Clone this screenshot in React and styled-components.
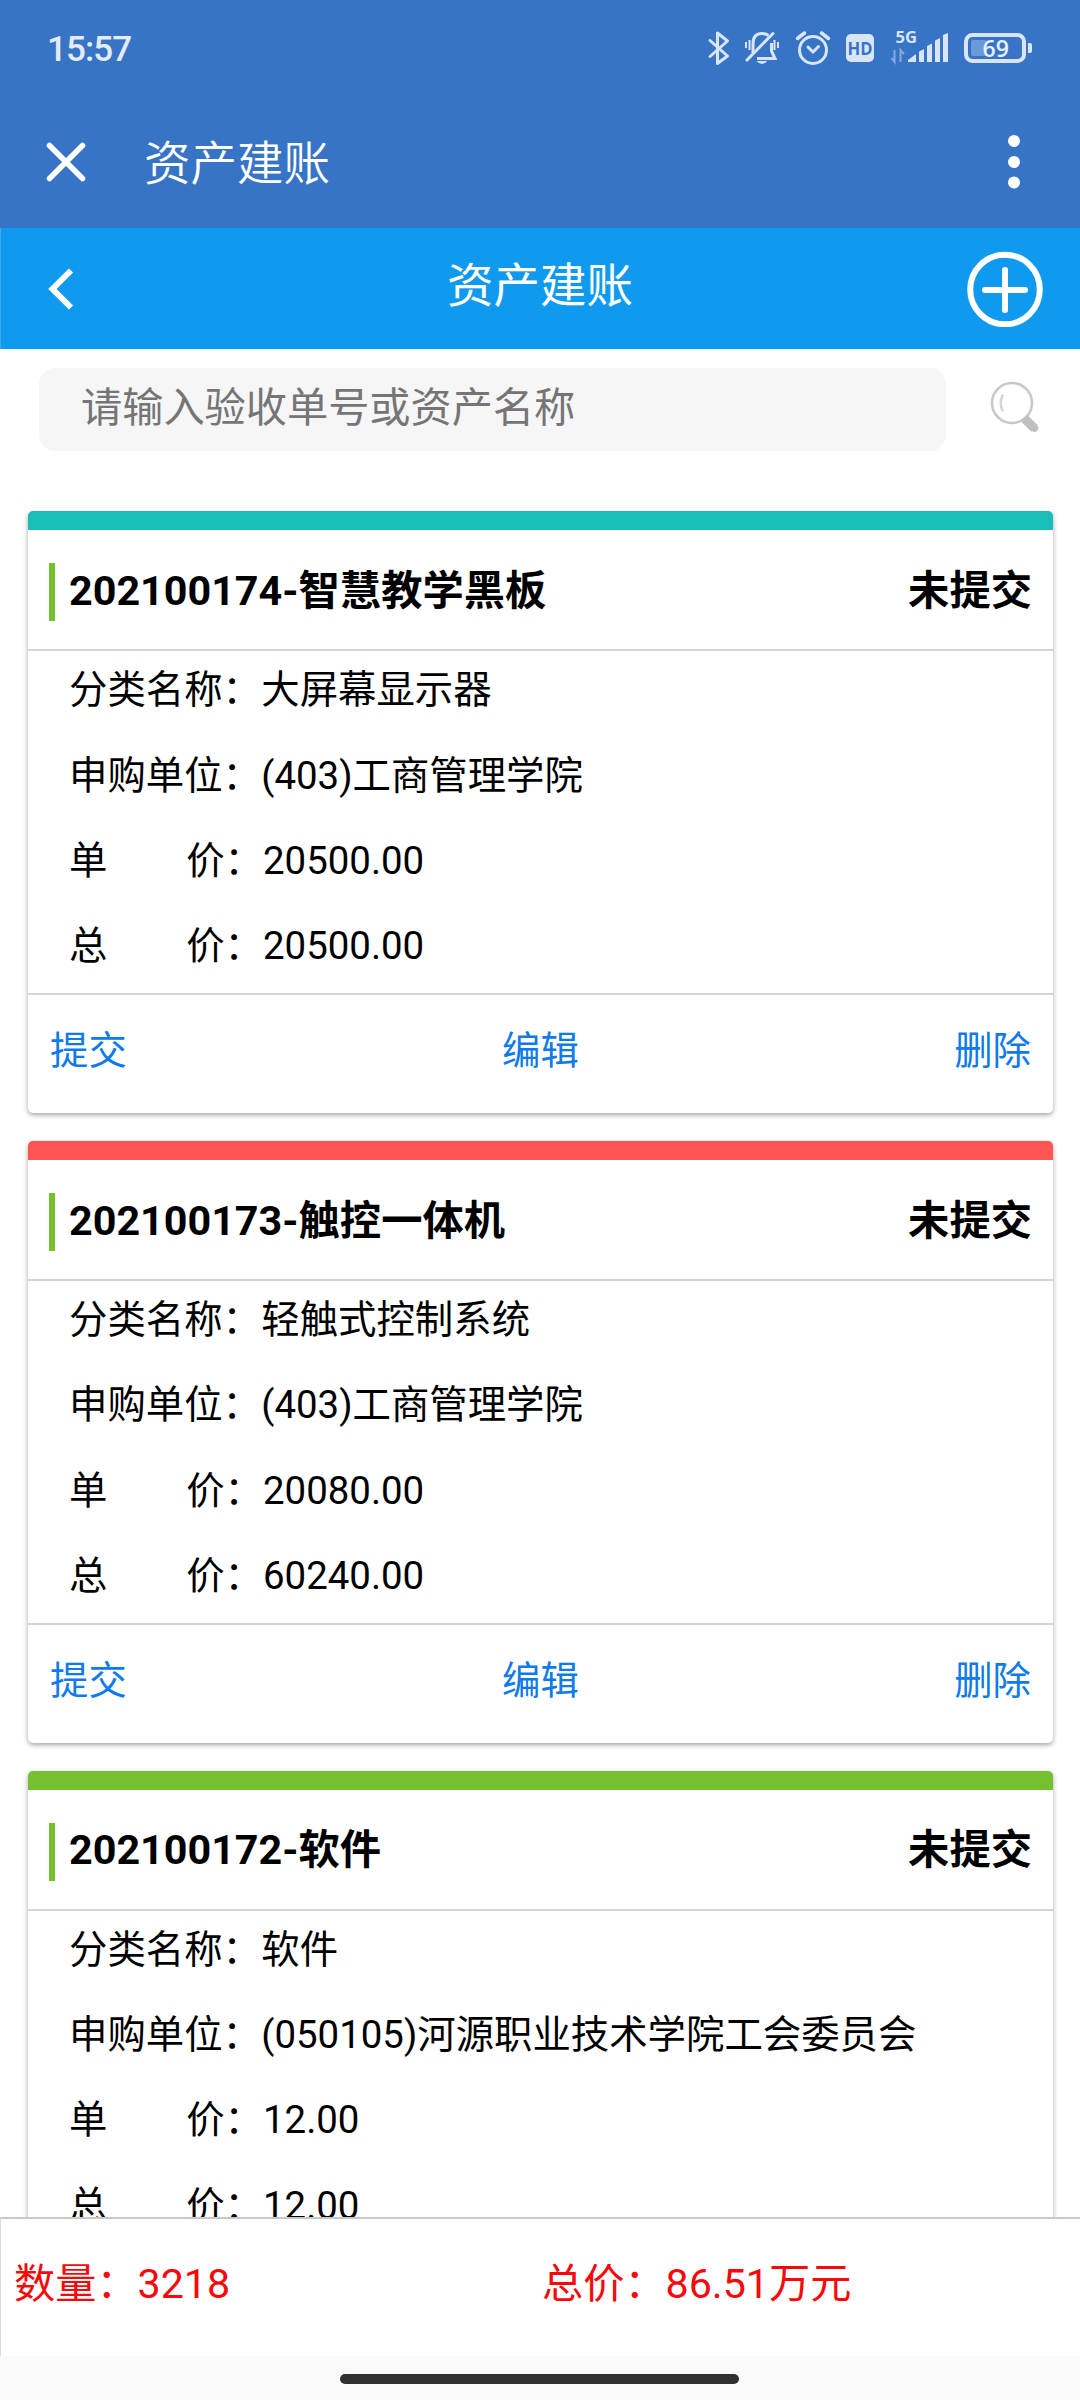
import styled, { createGlobalStyle } from "styled-components";

const GlobalStyle = createGlobalStyle`
  * {
    box-sizing: border-box;
  }
  body {
    margin: 0;
    background: #fff;
    font-family: Roboto, "Noto Sans CJK SC", sans-serif;
    color: #000;
  }
`;

const Screen = styled.div`
  width: 1080px;
  height: 2400px;
  display: flex;
  flex-direction: column;
  overflow: hidden;
  background: #fff;
`;

const StatusBar = styled.div`
  height: 97px;
  flex: none;
  padding: 0 48px 0 47px;
  display: flex;
  justify-content: space-between;
  background: #3874c6;
`;

const Clock = styled.span`
  font-size: 35px;
  font-weight: 500;
  line-height: 99px;
  letter-spacing: -0.9px;
  color: #e3ecfa;
`;

const StatusIcons = styled.svg`
  width: 330px;
  height: 97px;
  margin-right: -4px;
  font-family: "Open Sans", sans-serif;
`;

const AppBar = styled.div`
  height: 131px;
  flex: none;
  padding: 0 60px 1px 46px;
  display: flex;
  align-items: center;
  background: #3874c6;
  color: #fff;
`;

const AppTitle = styled.h1`
  flex: 1;
  margin: 4px 0 0 58px;
  font-size: 46.5px;
  line-height: 60px;
  font-weight: 350;
`;

const NavBar = styled.div`
  height: 121px;
  flex: none;
  padding: 0 37px 0 47px;
  display: flex;
  align-items: center;
  justify-content: space-between;
  background: #109aef;
  border-left: 1px solid #3fa9ee;
  color: #fff;
`;

const NavTitle = styled.h2`
  margin: 0 0 6px 39px;
  font-size: 46.5px;
  line-height: 60px;
  font-weight: 400;
`;

const SearchRow = styled.div`
  flex: none;
  height: 162px;
  padding: 19px 38px 0 39px;
  display: flex;
  justify-content: space-between;
`;

const SearchInput = styled.input`
  width: 907px;
  height: 83px;
  padding: 0 42px 3px;
  border: 0;
  border-radius: 16px;
  background: #f6f6f6;
  font-family: inherit;
  font-size: 41.2px;

  &::placeholder {
    color: #757575;
    opacity: 1;
  }
`;

const List = styled.div`
  flex: 1;
  min-height: 0;
  overflow: hidden;
  padding: 0.3px 27px 0 28px;
`;

const Card = styled.div`
  height: 602px;
  margin-bottom: 27.8px;
  border-top: 19px solid ${(props) => props.$color};
  border-radius: 5px;
  background: #fff;
  box-shadow: 0 2px 5px rgba(0, 0, 0, 0.36);
`;

const CardHead = styled.div`
  height: 121px;
  padding: 0 21px;
  display: flex;
  align-items: center;
  border-bottom: 2px solid #d3d3d3;
  font-size: 41.3px;
  font-weight: 700;

  span {
    margin-bottom: 6px;
  }
`;

const Mark = styled.div`
  width: 6px;
  height: 58px;
  margin-top: 5px;
  margin-right: 14px;
  background: #76bf2f;
`;

const CardTitle = styled.span`
  flex: 1;
`;

const CardBody = styled.div`
  height: 343.5px;
  padding-left: 41px;
  border-bottom: 2px solid #d3d3d3;
  font-size: 38.4px;
`;

const Field = styled.div`
  height: 85.3px;
  display: flex;
  line-height: 78px;
`;

const Label = styled.span`
  width: ${(props) => (props.$spaced ? 194 : 192.3)}px;
  display: flex;
  justify-content: space-between;
  white-space: nowrap;
`;

const CardActions = styled.div`
  height: 112px;
  padding: 0 22px;
  display: flex;
  justify-content: space-between;
  font-size: 38.4px;
  line-height: 111px;
  color: #0f7aec;
`;

const Footer = styled.div`
  flex: none;
  height: 139px;
  padding-left: 13px;
  display: grid;
  grid-template-columns: 528px 1fr;
  border-top: 2px solid #c8c8c8;
  border-left: 1px solid #dedede;
  background: #fff;
  font-size: 41.2px;
  line-height: 131px;
  color: #f80808;
`;

const GestureArea = styled.div`
  flex: none;
  height: 44px;
  padding-top: 18px;
  background: #fafafa;
`;

const GestureBar = styled.div`
  width: 399px;
  height: 10px;
  margin-left: 340px;
  border-radius: 5px;
  background: #303030;
`;

const assets = [
  {
    code: "202100174",
    name: "智慧教学黑板",
    color: "#1abeb8",
    category: "大屏幕显示器",
    unit: "(403)工商管理学院",
    price: "20500.00",
    total: "20500.00",
    actions: ["提交", "编辑", "删除"],
  },
  {
    code: "202100173",
    name: "触控一体机",
    color: "#ff5454",
    category: "轻触式控制系统",
    unit: "(403)工商管理学院",
    price: "20080.00",
    total: "60240.00",
    actions: ["提交", "编辑", "删除"],
  },
  {
    code: "202100172",
    name: "软件",
    color: "#76bf2f",
    category: "软件",
    unit: "(050105)河源职业技术学院工会委员会",
    price: "12.00",
    total: "12.00",
    actions: [],
  },
];

const DeviceStatus = () => (
  <StatusIcons viewBox="706 0 330 97" fill="none" stroke="#d9e5f6">
    {/* bluetooth */}
    <path d="M710 40.500L727.500 56L717.500 63.500V33L727.500 41L710 56.500" strokeWidth="3" strokeLinejoin="round" strokeLinecap="round" />
    {/* muted bell */}
    <path d="M753 53V44Q753 33.500 762 33.500Q766 33.500 768.500 35.500M771.500 43V51L775 58.500H757" strokeWidth="3" />
    <path d="M747 60L773 33.500" strokeWidth="3" strokeLinecap="round" />
    <path d="M746 42V48M749.500 40V50M774.500 40V50M778 42V48" strokeWidth="2" />
    <path d="M756.500 61H767.500Q762 67 756.500 61Z" fill="#d9e5f6" stroke="none" />
    {/* alarm */}
    <circle cx="813" cy="50" r="13.500" strokeWidth="3" />
    <path d="M808 47L813 52L818.500 46.500" strokeWidth="3" strokeLinecap="round" strokeLinejoin="round" />
    <path d="M797.500 38.500L804.500 33M821.500 33L828.500 38.500" strokeWidth="3.500" strokeLinecap="round" />
    {/* hd */}
    <rect x="846" y="34" width="28" height="28" rx="5" fill="#d9e5f6" stroke="none" />
    <text x="847.500" y="55" fontSize="18" fontWeight="700" fill="#3874c6" stroke="none" textLength="25" lengthAdjust="spacingAndGlyphs">HD</text>
    {/* network */}
    <text x="895.500" y="43" fontSize="16.500" fontWeight="700" fill="#d9e5f6" stroke="none">5G</text>
    <path d="M894.500 50V62L891.500 58M900.500 62V50L904 54" stroke="#86aadf" strokeWidth="2" />
    <path d="M908 62V60L916 54V62ZM919 62V51.500L924 49V62ZM927 62V46L932 43.500V62ZM935 62V40.500L940 38V62ZM943 62V35L948 33V62Z" fill="#d9e5f6" stroke="none" />
    {/* battery */}
    <rect x="966" y="35" width="58" height="26" rx="6.500" strokeWidth="4" />
    <rect x="971" y="40" width="16" height="16" rx="2" fill="#6c99d8" stroke="none" />
    <path d="M1028 43H1030Q1032 43 1032 45V51Q1032 53 1030 53H1028Z" fill="#d9e5f6" stroke="none" />
    <text x="982.500" y="57" fontSize="23" fontWeight="600" fill="#e8f0fb" stroke="none">69</text>
  </StatusIcons>
);

const CloseIcon = () => (
  <svg width="40" height="40" viewBox="0 0 40 40" stroke="#fff" strokeWidth="5.500" strokeLinecap="round">
    <path d="M3.500 3.500L36.500 36.500M36.500 3.500L3.500 36.500" />
  </svg>
);

const MoreIcon = () => (
  <svg width="12" height="54" viewBox="0 0 12 54" fill="#fff">
    <circle cx="6" cy="6" r="6" />
    <circle cx="6" cy="27" r="6" />
    <circle cx="6" cy="47.500" r="6" />
  </svg>
);

const BackIcon = () => (
  <svg width="26" height="42" viewBox="0 0 26 42" fill="none" stroke="#fff" strokeWidth="6">
    <path d="M23 2.500L4.500 21L23 39.500" />
  </svg>
);

const AddIcon = () => (
  <svg width="76" height="76" viewBox="0 0 76 76" fill="none" stroke="#fff" strokeWidth="6" strokeLinecap="round">
    <circle cx="38" cy="38.500" r="34.800" />
    <path d="M38 19V59M18 39H58" />
  </svg>
);

const SearchIcon = () => (
  <svg width="52" height="83" viewBox="0 0 52 83" fill="none" stroke="#c8c8c8">
    <circle cx="22" cy="35" r="20" strokeWidth="2.600" />
    <path d="M13 26.500Q8.500 35 13 43.500" strokeWidth="2.500" stroke="#d4d4d4" />
    <path d="M34 50L44.500 60.500" strokeWidth="9" stroke="#c0c0c0" />
    <path d="M43.500 59L44.500 60" strokeWidth="7.500" strokeLinecap="round" stroke="#c0c0c0" />
  </svg>
);

const AssetCard = ({ asset }) => {
  return (
    <Card $color={asset.color}>
      <CardHead>
        <Mark />
        <CardTitle>
          {asset.code}-{asset.name}
        </CardTitle>
        <span>未提交</span>
      </CardHead>
      <CardBody>
        <Field>
          <Label>分类名称：</Label>
          <span>{asset.category}</span>
        </Field>
        <Field>
          <Label>申购单位：</Label>
          <span>{asset.unit}</span>
        </Field>
        <Field>
          <Label $spaced>
            <span>单</span>
            <span>价：</span>
          </Label>
          <span>{asset.price}</span>
        </Field>
        <Field>
          <Label $spaced>
            <span>总</span>
            <span>价：</span>
          </Label>
          <span>{asset.total}</span>
        </Field>
      </CardBody>
      <CardActions>
        {asset.actions.map((action) => (
          <span key={action}>{action}</span>
        ))}
      </CardActions>
    </Card>
  );
};

const App = () => {
  return (
    <Screen>
      <GlobalStyle />
      <StatusBar>
        <Clock>15:57</Clock>
        <DeviceStatus />
      </StatusBar>
      <AppBar>
        <CloseIcon />
        <AppTitle>资产建账</AppTitle>
        <MoreIcon />
      </AppBar>
      <NavBar>
        <BackIcon />
        <NavTitle>资产建账</NavTitle>
        <AddIcon />
      </NavBar>
      <SearchRow>
        <SearchInput placeholder="请输入验收单号或资产名称" />
        <SearchIcon />
      </SearchRow>
      <List>
        {assets.map((asset) => (
          <AssetCard key={asset.code} asset={asset} />
        ))}
      </List>
      <Footer>
        <span>数量：3218</span>
        <span>总价：86.51万元</span>
      </Footer>
      <GestureArea>
        <GestureBar />
      </GestureArea>
    </Screen>
  );
};

export default App;
